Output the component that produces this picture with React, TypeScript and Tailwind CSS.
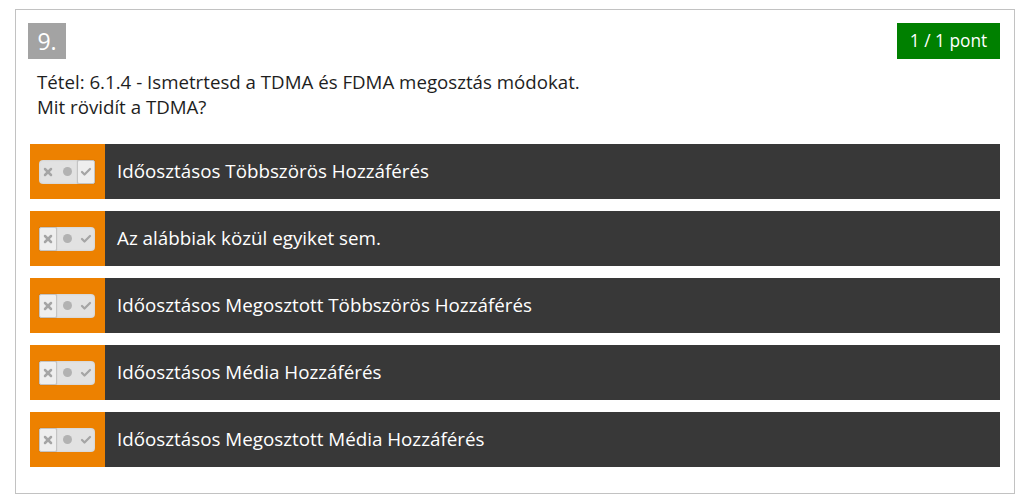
import { Check, X } from "lucide-react";

type Answer = {
  text: string;
  choice: "yes" | "no";
};

const ANSWERS: Answer[] = [
  { text: "Időosztásos Többszörös Hozzáférés", choice: "yes" },
  { text: "Az alábbiak közül egyiket sem.", choice: "no" },
  { text: "Időosztásos Megosztott Többszörös Hozzáférés", choice: "no" },
  { text: "Időosztásos Média Hozzáférés", choice: "no" },
  { text: "Időosztásos Megosztott Média Hozzáférés", choice: "no" },
];

function Toggle({ choice }: { choice: Answer["choice"] }) {
  const box = "flex h-full w-[18px] items-center justify-center";
  const picked = "border border-[#c4c4c4] bg-[#eeeeee] rounded-[2px] shadow-[0_0_1px_rgba(0,0,0,0.25)]";
  return (
    <div className="-ml-[1px] flex h-[24px] w-[56px] items-center rounded-[4px] bg-[#e2e2e2] shadow-[inset_0_0_2px_rgba(0,0,0,0.15)]">
      <div className={`${box} ${choice === "no" ? picked : ""}`}>
        <X className="h-[12px] w-[12px] text-[#a5a5a5]" strokeWidth={5} />
      </div>
      <div className="flex h-full flex-1 items-center justify-center">
        <span className="block h-[9px] w-[9px] rounded-full bg-[#b2b2b2]" />
      </div>
      <div className={`${box} ${choice === "yes" ? picked : ""}`}>
        <Check className="h-[12px] w-[12px] text-[#a5a5a5]" strokeWidth={4.5} />
      </div>
    </div>
  );
}

export default function App() {
  return (
    <div className="min-h-screen bg-white pl-[15px] pr-[11px] pt-[9px] font-['Open_Sans',sans-serif]">
      <div className="border border-[#c2c2c2] px-[14px] pt-[13px] pb-[26px]">
        <div className="flex items-start justify-between">
          <div className="-ml-[2px] flex h-[36px] w-[38px] items-center justify-center bg-[#a3a3a3] text-[23px] text-white">
            9.
          </div>
          <div className="flex h-[36px] w-[103px] items-center justify-center bg-[#008000] text-[17.3px] text-white">
            1 / 1 pont
          </div>
        </div>

        <div className="mt-[10px] pl-[7px] text-[18.7px] leading-[25px] text-[#1e1e1e]">
          <p>Tétel: 6.1.4 - Ismetrtesd a TDMA és FDMA megosztás módokat.</p>
          <p>Mit rövidít a TDMA?</p>
        </div>

        <div className="mt-[25px] flex flex-col gap-[12px]">
          {ANSWERS.map((a) => (
            <div key={a.text} className="flex h-[55px] w-full">
              <div className="flex w-[75px] items-center justify-center bg-[#ed8100]">
                <Toggle choice={a.choice} />
              </div>
              <div className="flex flex-1 items-center bg-[#383838] pl-[12px] text-[18.8px] text-white">
                {a.text}
              </div>
            </div>
          ))}
        </div>
      </div>
    </div>
  );
}
